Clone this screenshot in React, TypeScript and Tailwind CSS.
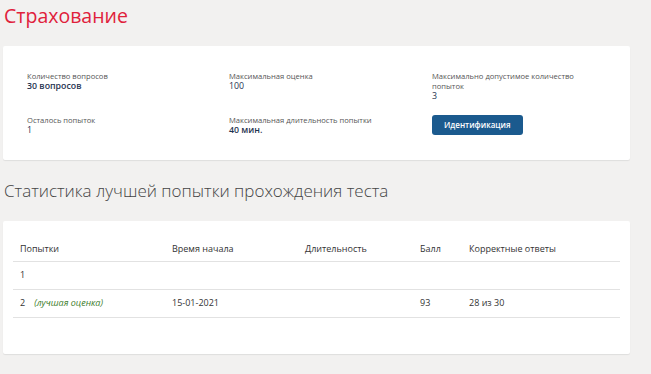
import React from "react";

const info = [
  { label: "Количество вопросов", value: "30 вопросов", bold: true },
  { label: "Максимальная оценка", value: "100" },
  { label: "Максимально допустимое количество попыток", value: "3" },
  { label: "Осталось попыток", value: "1" },
  { label: "Максимальная длительность попытки", value: "40 мин.", bold: true },
];

const rows = [
  { n: "1", best: false, start: "", dur: "", score: "", correct: "" },
  { n: "2", best: true, start: "15-01-2021", dur: "", score: "93", correct: "28 из 30" },
];

function Info({ label, value, bold }: { label: string; value: string; bold?: boolean }) {
  return (
    <div className="w-[160px]">
      <div className="text-[7.6px] leading-[10px] text-[#555]">{label}</div>
      <div className={`text-[8.8px] leading-[11px] text-[#1f3350] ${bold ? "font-semibold" : ""}`}>{value}</div>
    </div>
  );
}

export default function App() {
  return (
    <div
      className="w-[651px] h-[374px] bg-[#f2f1f0] overflow-hidden pt-[2px]"
      style={{ fontFamily: '"Open Sans", "Noto Sans", sans-serif' }}
    >
      <h1 className="pl-[4px] text-[19.5px] leading-[28px] text-[#e0213b]">Страхование</h1>

      {/* info card */}
      <div className="mt-[16px] ml-[3px] w-[627px] h-[114px] bg-white rounded-[2px] shadow-[0_1px_1px_rgba(0,0,0,0.08)] pl-[24px] pt-[25px]">
        <div className="grid grid-cols-[202px_203px_1fr] gap-y-[13px]">
          <Info {...info[0]} />
          <Info {...info[1]} />
          <Info {...info[2]} />
          <Info {...info[3]} />
          <Info {...info[4]} />
          <div className="flex">
            <button className="h-[20px] px-[12px] rounded-[3px] bg-[#1b5a8e] text-white text-[8px] font-semibold leading-[20px]">
              Идентификация
            </button>
          </div>
        </div>
      </div>

      <h2 className="mt-[20px] pl-[4px] text-[17px] leading-[22px] font-light text-[#444]">
        Статистика лучшей попытки прохождения теста
      </h2>

      {/* stats card */}
      <div className="mt-[19px] ml-[3px] w-[627px] h-[133px] bg-white rounded-[2px] shadow-[0_1px_1px_rgba(0,0,0,0.08)] px-[10px] pt-[16px]">
        <table className="w-full border-collapse text-[9px] text-[#333]">
          <thead>
            <tr className="border-b border-[#e2e2e2] h-[24px]">
              <th className="w-[152px] text-left font-normal pl-[7px]">Попытки</th>
              <th className="w-[133px] text-left font-normal pl-[7px]">Время начала</th>
              <th className="w-[115px] text-left font-normal pl-[7px]">Длительность</th>
              <th className="w-[49px] text-left font-normal pl-[7px]">Балл</th>
              <th className="text-left font-normal pl-[7px]">Корректные ответы</th>
            </tr>
          </thead>
          <tbody>
            {rows.map((r) => (
              <tr key={r.n} className="border-b border-[#e2e2e2] h-[28px]">
                <td className="pl-[7px]">
                  {r.n}
                  {r.best && <span className="ml-[9px] italic text-[9px] text-[#3d7d2c]">(лучшая оценка)</span>}
                </td>
                <td className="pl-[7px]">{r.start}</td>
                <td className="pl-[7px]">{r.dur}</td>
                <td className="pl-[7px]">{r.score}</td>
                <td className="pl-[7px]">{r.correct}</td>
              </tr>
            ))}
          </tbody>
        </table>
      </div>
    </div>
  );
}
